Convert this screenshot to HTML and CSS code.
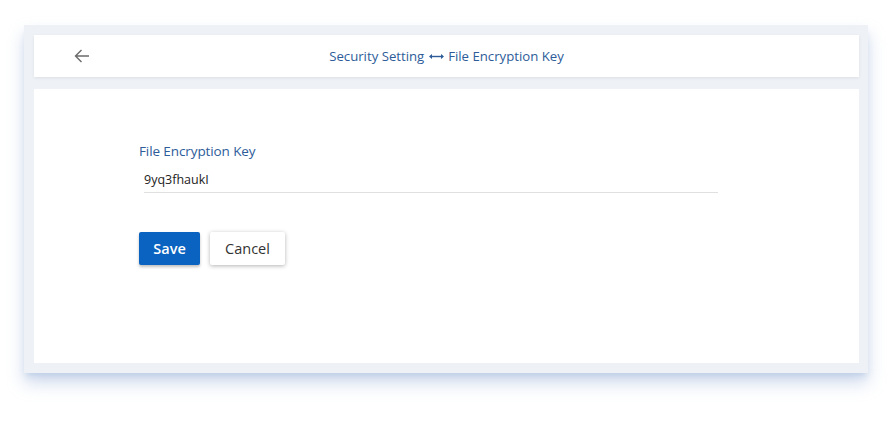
FILE: index.html
```html
<!DOCTYPE html>
<html>
<head>
<meta charset="utf-8">
<link rel="stylesheet" href="styles.css">
</head>
<body>
<div class="frame">
  <div class="header">
    <button class="back" aria-label="Back">
      <svg width="16" height="14" viewBox="0 0 16 14"><path d="M15 7H1.5M7.5 1 1.5 7l6 6" fill="none" stroke="#6b6b6b" stroke-width="1.4"/></svg>
    </button>
    <div class="title">Security Setting <svg class="arrow" width="15" height="7" viewBox="0 0 15 7"><path d="M2 3.5h11" stroke="#2d5c99" stroke-width="1.4"/><path d="M0 3.5 3 1v5zM15 3.5 12 1v5z" fill="#2d5c99"/></svg> File Encryption Key</div>
  </div>
  <div class="panel">
    <label class="label">File Encryption Key</label>
    <div class="field">9yq3fhaukI</div>
    <div class="actions">
      <button class="btn primary">Save</button>
      <button class="btn secondary">Cancel</button>
    </div>
  </div>
</div>
</body>
</html>
```
FILE: styles.css
```css
html, body { margin: 0; background: #fff; }
body {
  font-family: "Open Sans", "Noto Sans", sans-serif;
  min-height: 426px;
  padding-top: 25px;
  box-sizing: border-box;
}
.frame {
  margin: 0 0 0 24px;
  width: 825px;
  height: 328px;
  padding: 10px 9px 10px 10px;
  background: #eef1f5;
  display: flex;
  flex-direction: column;
  gap: 12px;
  box-shadow: 0 10px 16px rgba(140, 168, 212, 0.4), 0 5px 6px -2px rgba(140, 168, 212, 0.3);
}
.header {
  height: 42px;
  background: #fff;
  display: flex;
  align-items: center;
  position: relative;
  box-shadow: 0 1px 3px rgba(0,0,0,0.08);
}
.back {
  border: 0; background: none; padding: 0;
  margin-left: 40px;
  display: flex;
}
.title {
  flex: 1;
  text-align: center;
  margin-right: 56px;
  color: #2d5c99;
  font-size: 13.2px;
}
.arrow { vertical-align: 1px; margin: 0 1px; }
.panel {
  flex: 1;
  background: #fff;
  padding: 53px 0 0 105px;
}
.label {
  display: block;
  color: #2d5c99;
  font-size: 13.5px;
  letter-spacing: -0.1px;
}
.field {
  margin: 11px 0 0 5px;
  width: 574px;
  border-bottom: 1px solid #e0e0e0;
  font-size: 12.5px;
  color: #222;
  padding-bottom: 4px;
}
.actions {
  display: flex;
  gap: 10px;
  margin-top: 39px;
}
.btn {
  font-family: inherit;
  height: 33px;
  border: 0;
  border-radius: 2px;
  font-size: 14.5px;
  padding: 0;
}
.primary {
  width: 61px;
  background: #0a63c0;
  color: #fff;
  font-weight: 600;
  box-shadow: 0 2px 3px rgba(0,0,0,0.25);
}
.secondary {
  width: 75px;
  background: #fff;
  color: #333;
  box-shadow: 0 1px 4px rgba(0,0,0,0.3);
}
```
